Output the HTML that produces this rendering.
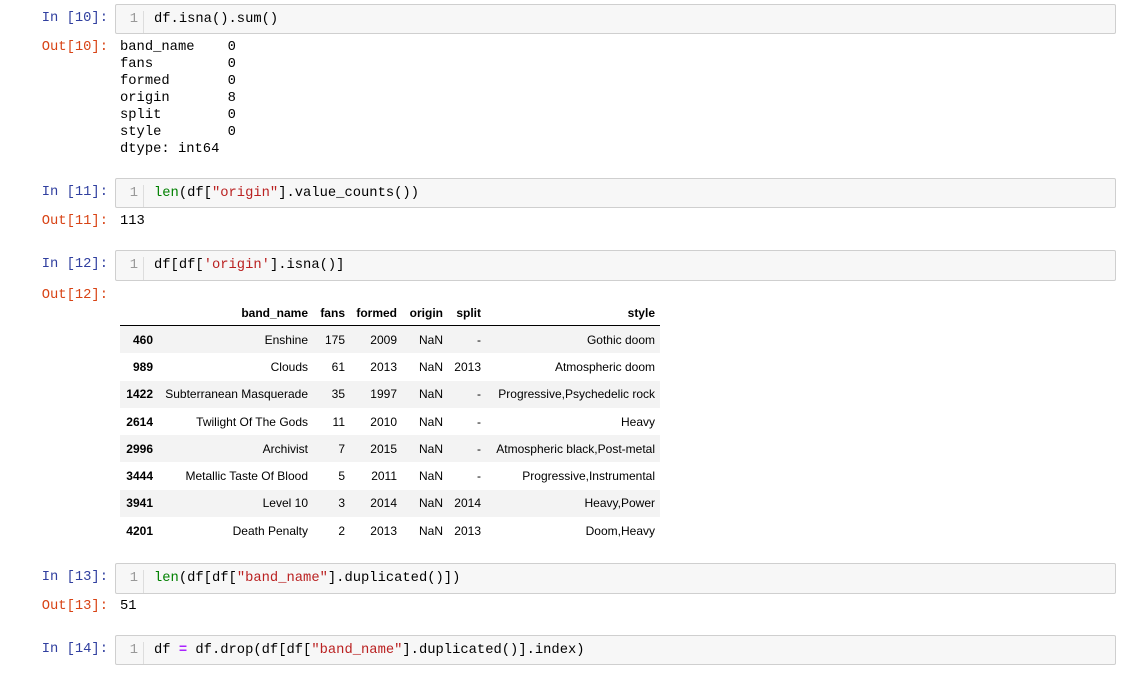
<!DOCTYPE html>
<html><head><style>
body{margin:0;width:1129px;height:673px;background:#fff;position:relative;overflow:hidden;font-family:"Liberation Mono",monospace;font-size:13.8px;}
.p{position:absolute;line-height:17px;white-space:pre;}
.in{color:#303f9f;right:1021px;text-align:right;}
.out{color:#d84315;right:1021px;text-align:right;}
.box{position:absolute;left:115px;width:1001px;background:#f7f7f7;border:1px solid #cfcfcf;border-radius:2px;box-sizing:border-box;}
.gut{position:absolute;left:0;top:0;bottom:0;width:28px;border-right:1px solid #ddd;color:#999;text-align:right;padding-right:5px;box-sizing:border-box;}
.code{position:absolute;left:38px;}
.g{color:#008000}.s{color:#ba2121}.o{color:#aa22ff;font-weight:bold}
table{position:absolute;left:120px;top:301px;border-collapse:collapse;table-layout:fixed;width:540px;font-family:"Liberation Sans",sans-serif;font-size:12px;color:#000;}
th,td{text-align:right;padding:0 5px 0 0;height:27.3px;white-space:nowrap;}
thead th{height:24px;vertical-align:middle;border-bottom:1px solid #000;}
tbody tr:nth-child(odd){background:#f3f3f3;}
</style></head><body>

<div class="p in" style="top:10px">In [10]:</div>
<div class="box" style="top:4px;height:30px"><div class="gut p" style="top:6px;position:absolute">1</div><div class="p code" style="top:6px">df.isna().sum()</div></div>
<div class="p out" style="top:39px">Out[10]:</div>
<div class="p" style="left:120px;top:39px">band_name    0
fans         0
formed       0
origin       8
split        0
style        0
dtype: int64</div>

<div class="p in" style="top:184px">In [11]:</div>
<div class="box" style="top:178px;height:30px"><div class="gut p" style="top:6px;position:absolute">1</div><div class="p code" style="top:6px"><span class="g">len</span>(df[<span class="s">"origin"</span>].value_counts())</div></div>
<div class="p out" style="top:213px">Out[11]:</div>
<div class="p" style="left:120px;top:213px">113</div>

<div class="p in" style="top:256px">In [12]:</div>
<div class="box" style="top:250px;height:31px"><div class="gut p" style="top:6px;position:absolute">1</div><div class="p code" style="top:6px">df[df[<span class="s">'origin'</span>].isna()]</div></div>
<div class="p out" style="top:287px">Out[12]:</div>

<table>
<colgroup><col style="width:38px"><col style="width:155px"><col style="width:37px"><col style="width:52px"><col style="width:46px"><col style="width:38px"><col style="width:174px"></colgroup>
<thead><tr><th></th><th>band_name</th><th>fans</th><th>formed</th><th>origin</th><th>split</th><th>style</th></tr></thead>
<tbody>
<tr><th>460</th><td>Enshine</td><td>175</td><td>2009</td><td>NaN</td><td>-</td><td>Gothic doom</td></tr>
<tr><th>989</th><td>Clouds</td><td>61</td><td>2013</td><td>NaN</td><td>2013</td><td>Atmospheric doom</td></tr>
<tr><th>1422</th><td>Subterranean Masquerade</td><td>35</td><td>1997</td><td>NaN</td><td>-</td><td>Progressive,Psychedelic rock</td></tr>
<tr><th>2614</th><td>Twilight Of The Gods</td><td>11</td><td>2010</td><td>NaN</td><td>-</td><td>Heavy</td></tr>
<tr><th>2996</th><td>Archivist</td><td>7</td><td>2015</td><td>NaN</td><td>-</td><td>Atmospheric black,Post-metal</td></tr>
<tr><th>3444</th><td>Metallic Taste Of Blood</td><td>5</td><td>2011</td><td>NaN</td><td>-</td><td>Progressive,Instrumental</td></tr>
<tr><th>3941</th><td>Level 10</td><td>3</td><td>2014</td><td>NaN</td><td>2014</td><td>Heavy,Power</td></tr>
<tr><th>4201</th><td>Death Penalty</td><td>2</td><td>2013</td><td>NaN</td><td>2013</td><td>Doom,Heavy</td></tr>
</tbody></table>

<div class="p in" style="top:569px">In [13]:</div>
<div class="box" style="top:563px;height:31px"><div class="gut p" style="top:6px;position:absolute">1</div><div class="p code" style="top:6px"><span class="g">len</span>(df[df[<span class="s">"band_name"</span>].duplicated()])</div></div>
<div class="p out" style="top:598px">Out[13]:</div>
<div class="p" style="left:120px;top:598px">51</div>

<div class="p in" style="top:641px">In [14]:</div>
<div class="box" style="top:635px;height:30px"><div class="gut p" style="top:6px;position:absolute">1</div><div class="p code" style="top:6px">df <span class="o">=</span> df.drop(df[df[<span class="s">"band_name"</span>].duplicated()].index)</div></div>

</body></html>
